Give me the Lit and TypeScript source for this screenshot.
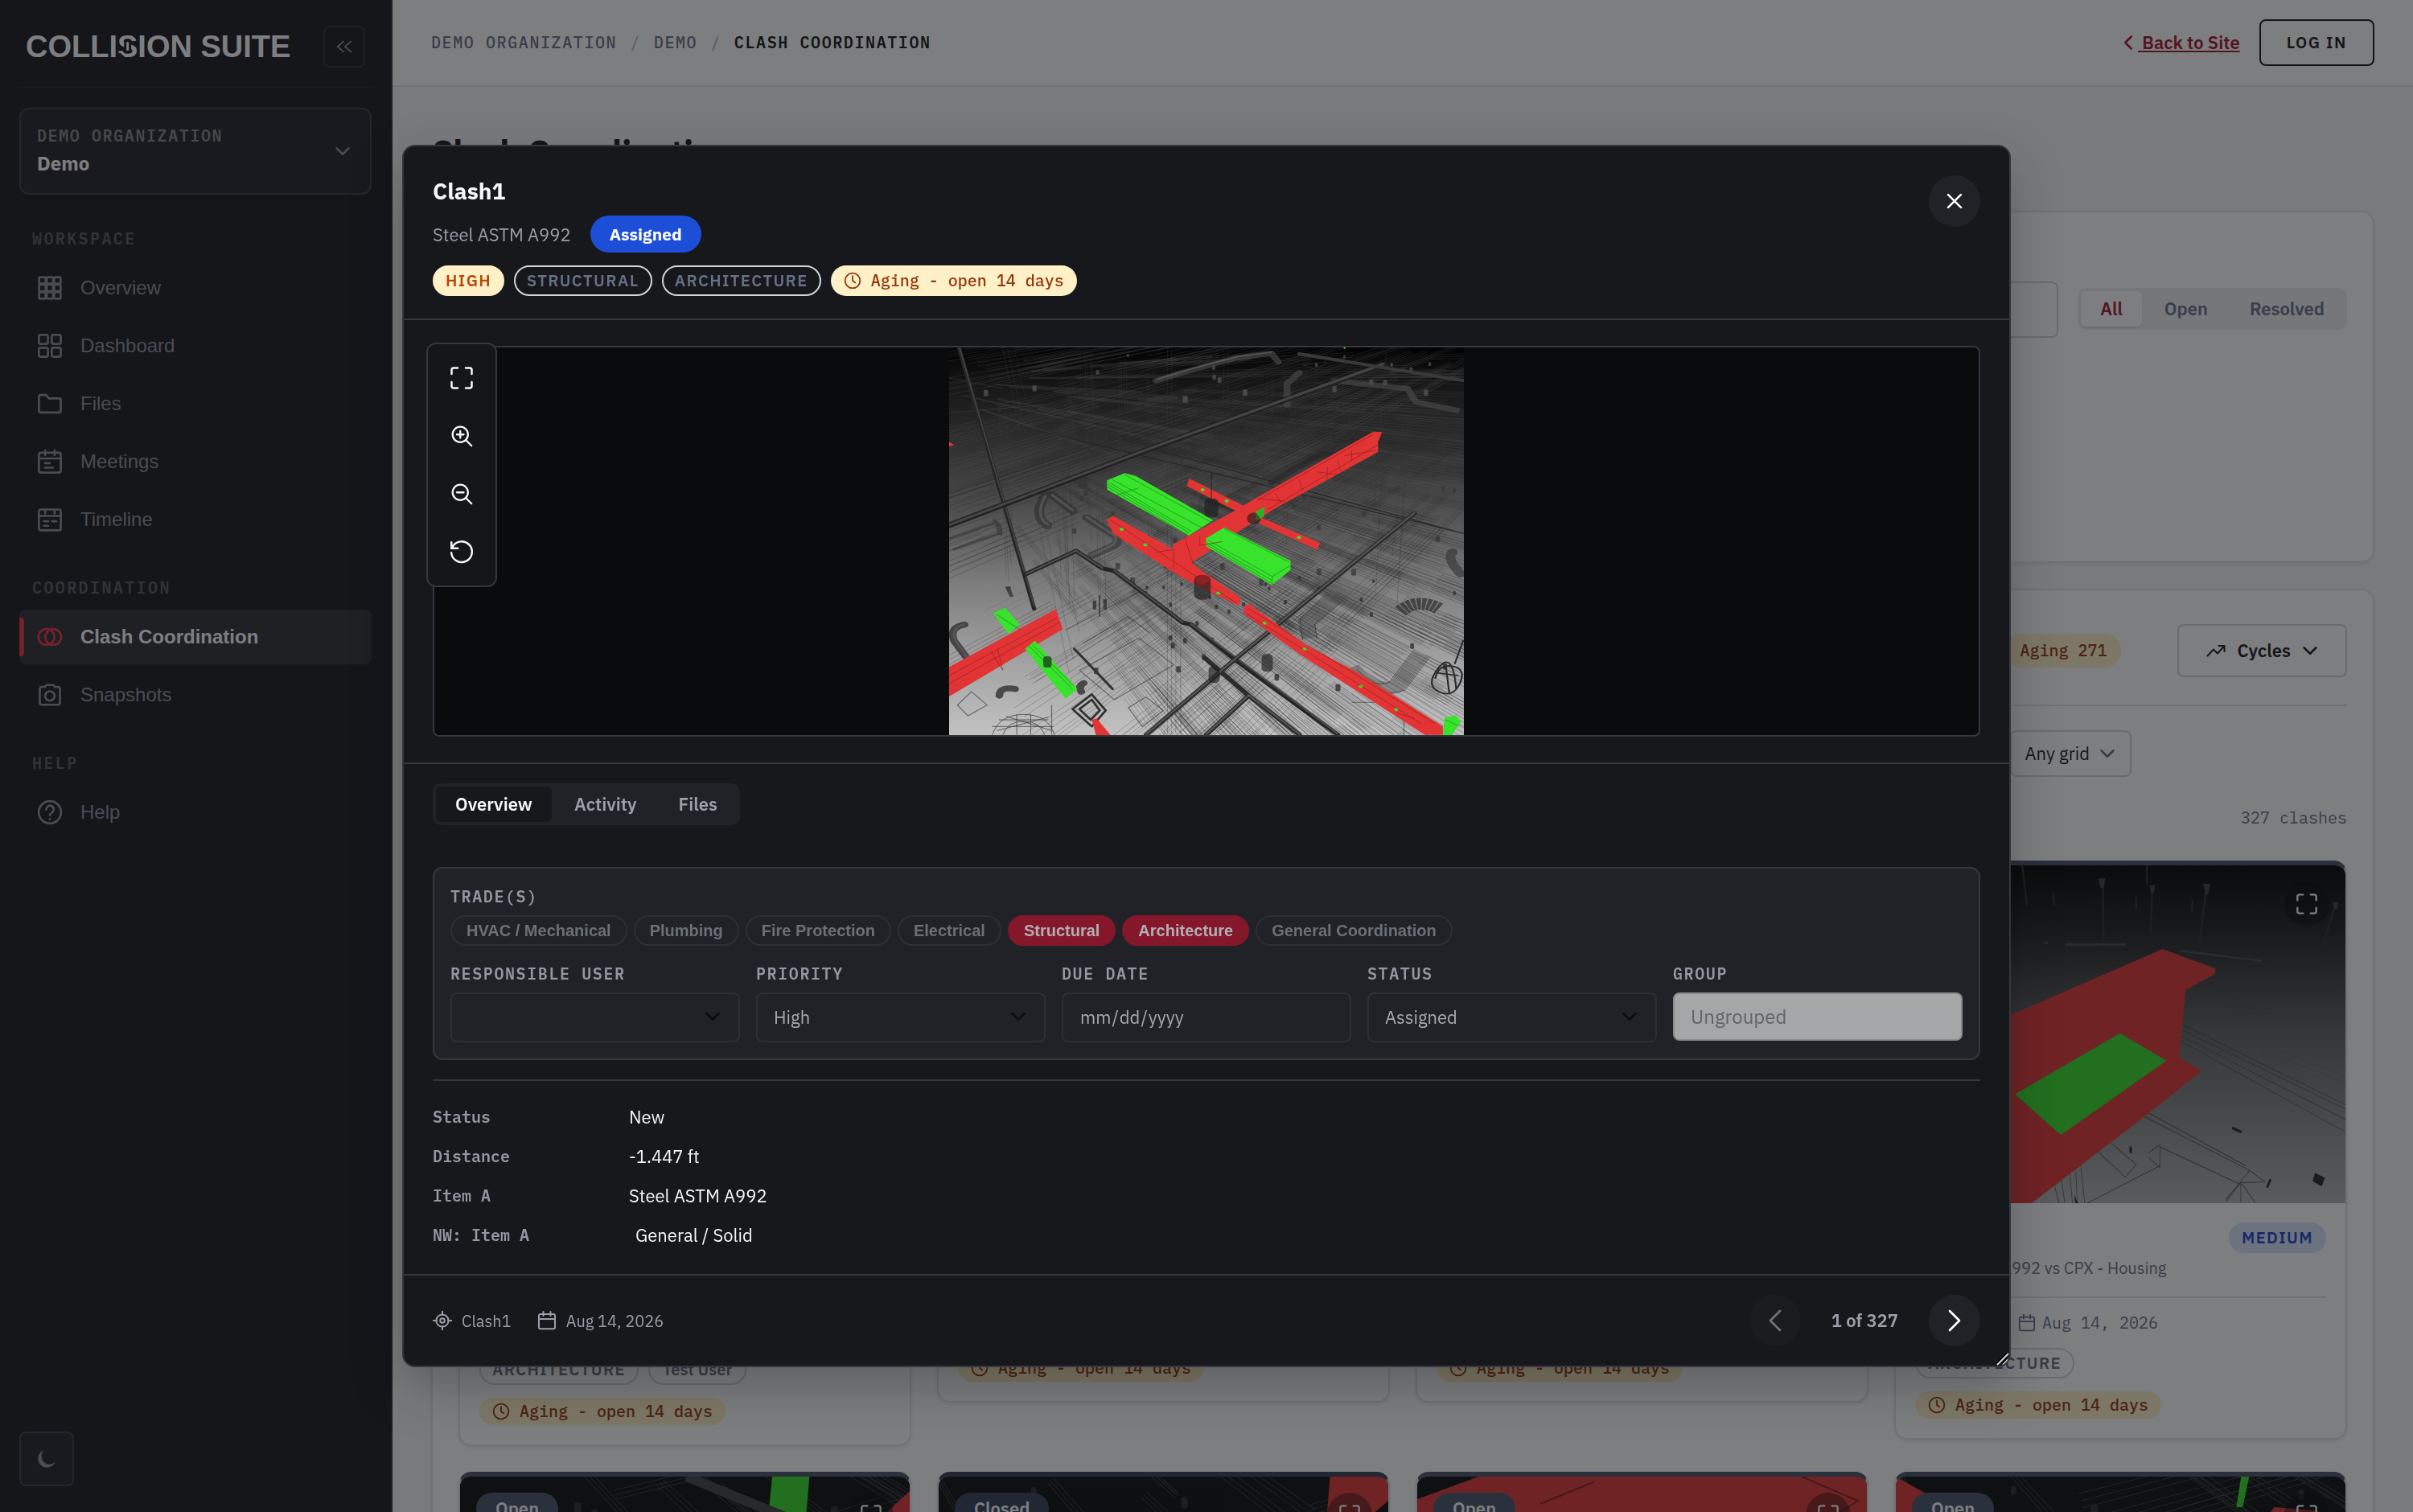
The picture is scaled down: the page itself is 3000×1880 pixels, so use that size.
import { LitElement, html, css, svg, nothing } from "lit";
import { customElement, property, state } from "lit/decorators.js";
import { classMap } from "lit/directives/class-map.js";

/* ---------- icons, all on a 24 unit grid ---------- */

const glyphs: Record<string, unknown> = {
  grid9: svg`${[2, 9, 16].map((y) => [2, 9, 16].map((x) => svg`<rect x=${x} y=${y} width="6" height="6" rx="1"/>`))}`,
  grid4: svg`<rect x="1.8" y="1.8" width="8.4" height="8.4" rx="1.6"/><rect x="13.8" y="1.8" width="8.4" height="8.4" rx="1.6"/><rect x="1.8" y="13.8" width="8.4" height="8.4" rx="1.6"/><rect x="13.8" y="13.8" width="8.4" height="8.4" rx="1.6"/>`,
  folder: svg`<path d="M1.8 18.6V5.4A1.6 1.6 0 0 1 3.4 3.8h5L11.2 7h9.4a1.6 1.6 0 0 1 1.6 1.6v10a1.6 1.6 0 0 1-1.6 1.6H3.4a1.6 1.6 0 0 1-1.6-1.6z"/>`,
  meetings: svg`<rect x="1.8" y="3.6" width="20.4" height="18.6" rx="2"/><path d="M1.8 9h20.4M7.6 1.4v4.4M16.4 1.4v4.4M7.4 13.4h4.4M7.4 17.6h7.4"/>`,
  timeline: svg`<rect x="1.8" y="2.6" width="20.4" height="19.4" rx="2"/><path d="M1.8 8.6h20.4M7.6 2.8v3.6M16.4 2.8v3.6M6.4 13.6h4M14 13.6h4M6.4 17.8h4"/>`,
  clash: svg`<circle cx="8.8" cy="12" r="7.4"/><circle cx="15.2" cy="12" r="7.4"/>`,
  camera: svg`<path d="M4.6 4.600h2.600l1.400-1.800h6.800l1.400 1.800h2.600a2 2 0 0 1 2 2v12.600a2 2 0 0 1-2 2H4.600a2 2 0 0 1-2-2V6.600a2 2 0 0 1 2-2z"/><circle cx="12" cy="13" r="4.400"/>`,
  help: svg`<circle cx="12" cy="12" r="10.400"/><path d="M8.600 9.300a3.500 3.500 0 1 1 5.400 2.900c-1.300.9-2 1.500-2 2.700M12 18.200v.2"/>`,
  collapse: svg`<path d="M11 5l-8 7 8 7M21 5l-8 7 8 7"/>`,
  down: svg`<path d="M3 7.500l9 9 9-9"/>`,
  left: svg`<path d="M16.500 3l-9 9 9 9"/>`,
  right: svg`<path d="M7.500 3l9 9-9 9"/>`,
  close: svg`<path d="M2.500 2.500l19 19M21.500 2.500l-19 19"/>`,
  expand: svg`<path d="M2 8V4a2 2 0 0 1 2-2h4M16 2h4a2 2 0 0 1 2 2v4M22 16v4a2 2 0 0 1-2 2h-4M8 22H4a2 2 0 0 1-2-2v-4"/>`,
  zoomIn: svg`<circle cx="10.500" cy="10.500" r="8.200"/><path d="M16.500 16.500l6 6M10.500 6.800v7.400M6.800 10.500h7.400"/>`,
  zoomOut: svg`<circle cx="10.500" cy="10.500" r="8.200"/><path d="M16.500 16.500l6 6M6.800 10.500h7.400"/>`,
  reset: svg`<path d="M1.800 2.500v6h6.400M2.300 8.500A10.300 10.300 0 1 1 1.700 13"/>`,
  clock: svg`<circle cx="12" cy="12" r="10.200"/><path d="M12 5.600V12l3.600 2.600"/>`,
  target: svg`<circle cx="12" cy="12" r="7.600"/><circle cx="12" cy="12" r="2.800"/><path d="M12 .8v4M12 19.200v4M.8 12h4M19.200 12h4"/>`,
  calendar: svg`<rect x="2" y="4" width="20" height="18.200" rx="2"/><path d="M2 10h20M7.500 1v5M16.500 1v5"/>`,
  trend: svg`<path d="M1.500 18.500l7.500-8 5 5L22 6.500M15.500 6H22.500v7"/>`,
};

const icon = (name: string, cls = "i24") => html`
  <svg class="icon ${cls}" viewBox="0 0 24 24" aria-hidden="true">${glyphs[name]}</svg>
`;

const shared = css`
  :host {
    box-sizing: border-box;
    --sans: "IBM Plex Sans", Roboto, "Liberation Sans", sans-serif;
    --ui: "Liberation Sans", Arial, sans-serif;
    --mono: "IBM Plex Mono", "Liberation Mono", monospace;
  }
  *, *::before, *::after { box-sizing: border-box; }
  button, input, select { font: inherit; color: inherit; margin: 0; }
  button { cursor: pointer; background: none; border: 0; padding: 0; }
  a { color: inherit; text-decoration: none; }
  h1, h2, ul, dl, dd { margin: 0; padding: 0; }
  .icon { display: block; flex: none; fill: none; stroke: currentColor; stroke-width: 2; stroke-linecap: round; stroke-linejoin: round; overflow: visible; }
  .i20 { width: 20px; height: 20px; stroke-width: 3; }
  .i22 { width: 22px; height: 22px; }
  .i24 { width: 24px; height: 24px; }
  .i28 { width: 28px; height: 28px; }
  .i30 { width: 30px; height: 30px; }
  .i32 { width: 32px; height: 32px; }
  .pill {
    display: inline-flex; align-items: center; height: 38px; padding: 0 14px;
    border: 2px solid #d0d5dd; border-radius: 20px; color: #667085;
    font: 600 20px/34px var(--sans); letter-spacing: 0.07em; white-space: nowrap;
  }
  .pill.high { background: #fef0c7; border-color: #fef0c7; color: #b54708; }
  .pill.medium { background: #d9e5fb; border-color: #d9e5fb; color: #1e3fce; }
  .pill.person { letter-spacing: 0; padding: 0 16px; }
  .aging {
    display: inline-flex; align-items: center; gap: 12px; height: 34px; padding: 0 16px;
    border-radius: 20px; background: #fef0c7; color: #93370d;
    font: 500 20px/34px var(--mono); white-space: nowrap;
  }
  .aging.large { height: 38px; }
`;

/* ---------- model snapshots ---------- */

/** Small repeatable generator, so that each snapshot keeps the same wires. */
const seeded = (seed: number) => () => {
  seed = (seed * 1664525 + 1013904223) % 4294967296;
  return seed / 4294967296;
};

type Point = [number, number];

/** Bundles of wires that run away from one vanishing point. */
const bundle = (
  rand: () => number, origin: Point, from: number, to: number, near: number, far: number,
  count: number, strands: number
): string => {
  let d = "";
  for (let i = 0; i < count; i++) {
    const angle = from + (to - from) * rand();
    const start = near + (far - near) * rand() * 0.8;
    const end = start + (far - near) * (0.06 + rand() * 0.4);
    const gap = 0.004 + rand() * 0.004;
    for (let k = 0; k < strands; k++) {
      const a = angle + k * gap;
      d += `M${Math.round(origin[0] + Math.cos(a) * start)} ${Math.round(origin[1] + Math.sin(a) * start)}`;
      d += `L${Math.round(origin[0] + Math.cos(a) * end)} ${Math.round(origin[1] + Math.sin(a) * end)}`;
    }
  }
  return d;
};

const cans = (rand: () => number, count: number, x0: number, x1: number, y0: number, y1: number) =>
  Array.from({ length: count }, () => {
    const x = x0 + rand() * (x1 - x0);
    const y = y0 + rand() * (y1 - y0);
    const s = 0.5 + (0.6 * (y - y0)) / (y1 - y0);
    return svg`<rect x=${Math.round(x)} y=${Math.round(y)} width=${Math.round(13 * s)} height=${Math.round(24 * s)} rx="4"/>`;
  });

const clashScene = () => {
  const r = seeded(41);
  const fall = bundle(r, [-111, 156], 0.1, 1.05, 600, 2100, 120, 4);
  const fallLow = bundle(r, [-111, 156], 0.42, 1.0, 900, 2300, 110, 4);
  const rise = bundle(r, [2368, -414], 2.2, 2.78, 1100, 2900, 90, 3);
  const top = bundle(r, [-111, 156], -0.1, 0.45, 200, 1900, 60, 3);
  const topRise = bundle(r, [2368, -414], 2.55, 2.95, 900, 2600, 90, 3);
  let posts = "";
  for (let i = 0; i < 12; i++) {
    const x = 90 + r() * 1300;
    const y = 40 + r() * 300;
    for (let k = 0; k < 4; k++) posts += `M${Math.round(x + k * 7)} ${Math.round(y)}l${Math.round((700 - x) / 22)} ${Math.round(300 + r() * 420)}`;
  }
  posts += "M672 40V1480M684 40V1480M696 300V1480M710 420V1480M834 40V420M846 40V400M200 40L390 1250M214 40L402 1200M236 60L420 1100M1300 60L1280 330";
  return svg`
    <defs>
      <linearGradient id="haze" x1="0" y1="0" x2="0" y2="1">
        <stop offset="0" stop-color="#020202"/><stop offset=".1" stop-color="#171717"/>
        <stop offset=".24" stop-color="#2e2e2e"/><stop offset=".4" stop-color="#4a4a4a"/>
        <stop offset=".6" stop-color="#7b7b7b"/><stop offset=".8" stop-color="#a0a0a0"/>
        <stop offset="1" stop-color="#c2c2c2"/>
      </linearGradient>
    </defs>
    <rect x="46" y="36" width="1476" height="1446" fill="url(#haze)"/>
    <g fill="none" stroke-width="1.500">
      <path d=${top} stroke="#5c5c5c" opacity=".35"/>
      <path d=${topRise} stroke="#5c5c5c" opacity=".4"/>
      <path d=${posts} stroke="#3a3a3a" opacity=".5"/>
      <path d=${fall} stroke="#222" opacity=".4"/>
      <path d=${rise} stroke="#222" opacity=".45"/>
      <path d=${fallLow} stroke="#1c1c1c" opacity=".5"/>
      <path d="M250 330L1522 730M615 410L1522 730" stroke="#242424" opacity=".8" stroke-width="4"/>
      <path d="M420 1240L590 1120 690 1220 520 1350zM560 1380L610 1340 660 1390 600 1450zM70 1370L110 1320 155 1370 100 1410zM380 1090L600 940M430 1140L560 1040 620 1100M1200 1360H1350V1480M340 1370V1480" stroke="#333" opacity=".6" stroke-width="3"/>
      <path d="M46 280L320 250M46 500L230 425M1310 550L1520 530M46 150L200 190M1060 100L1130 90 1100 120z" stroke="#555" opacity=".6"/>
    </g>
    <g fill="#353535" opacity=".7">${cans(r, 44, 380, 1500, 360, 900)}</g>
    <g fill="#2a2a2a" opacity=".75">${cans(r, 32, 420, 1500, 860, 1300)}</g>
    <g fill="#606060" opacity=".6">${cans(r, 18, 90, 1480, 60, 220)}</g>
    <g fill="none" stroke-linejoin="round" stroke-linecap="round">
      <g opacity=".6">
        <path d="M640 160L720 128 870 75 970 58 990 90M1015 250L1015 170 1050 130M1150 160L1360 190 1385 240 1500 270" stroke="#4c4c4c" stroke-width="20"/>
        <path d="M320 590C296 640 300 680 328 700M340 585L400 645" stroke="#2e2e2e" stroke-width="28"/>
        <path d="M440 670L520 735Q540 750 520 775L455 812M430 515V552" stroke="#333" stroke-width="26"/>
        <path d="M970 540L1110 435 1150 435" stroke="#262626" stroke-width="20"/>
        <path d="M1490 800Q1470 820 1512 880" stroke="#333" stroke-width="28"/>
        <path d="M46 750L180 690 190 730 60 790M175 680Q200 700 195 735" stroke="#333" stroke-width="8"/>
      </g>
      <g opacity=".5">
        <path d="M322 590C300 640 304 680 330 697M342 587L400 643M440 668L518 735Q532 750 515 773L455 810" stroke="#6c6c6c" stroke-width="8"/>
        <path d="M642 156L720 124 870 71 970 54" stroke="#777" stroke-width="5"/>
      </g>
      <path d="M75 40L110 200 290 1012" stroke="#262626" stroke-width="12"/>
      <path d="M77 40L112 200 290 1000" stroke="#444" stroke-width="4"/>
      <path d="M46 700L600 425 1290 100" stroke="#222" stroke-width="20"/>
      <path d="M46 698L600 423 1290 98" stroke="#454545" stroke-width="9"/>
      <path d="M1050 60L1522 160" stroke="#3a3a3a" stroke-width="12"/>
      <path d="M265 882L410 795 485 860 520 870 715 1062 740 1070 860 1195 1160 1480" stroke="#262626" stroke-width="15"/>
      <path d="M268 880L410 794 485 858M520 868L715 1060M740 1068L1160 1476" stroke="#4c4c4c" stroke-width="6"/>
      <path d="M612 1480L870 1195 1380 655M784 1480L905 1335M780 1195L905 1335 1050 1480" stroke="#2c2c2c" stroke-width="15"/>
      <path d="M612 1478L870 1193 1380 653M784 1478L905 1333M905 1333L1050 1478" stroke="#555" stroke-width="6"/>
      <path d="M90 1070Q45 1080 60 1130L100 1200M190 1335Q190 1300 235 1310M425 1320Q415 1300 432 1288" stroke="#303030" stroke-width="22" opacity=".8"/>
      <path d="M90 1068Q50 1080 64 1130L100 1196" stroke="#5a5a5a" stroke-width="7" opacity=".8"/>
      <path d="M1340 1020Q1390 970 1450 1010" stroke="#363636" stroke-width="44" stroke-dasharray="11 3" stroke-linecap="butt" opacity=".8"/>
      <path d="M1150 970L1070 1060 1080 1120M1400 1180L1330 1300Q1260 1330 1200 1230" stroke="#3c3c3c" stroke-width="48" stroke-linecap="butt" opacity=".35"/>
      <path d="M1130 950L1052 1050 1060 1125M1168 990L1095 1070 1100 1120M1378 1165L1308 1285Q1260 1310 1215 1235M1422 1195L1352 1315Q1270 1350 1185 1250" stroke="#2c2c2c" stroke-width="2" opacity=".8"/>
      <path d="M405 1160L515 1310" stroke="#333" stroke-width="8"/>
      <path d="M400 1385L455 1330 495 1390 455 1450zM420 1385L455 1350 478 1390 452 1425z" stroke="#303030" stroke-width="7"/>
      <path d="M170 1480Q190 1405 260 1405T348 1480M200 1480Q215 1430 260 1430T320 1480M170 1450H345M190 1425H330M240 1405V1480M280 1405V1480M185 1465L330 1415M210 1412L340 1465" stroke="#3d3d3d" stroke-width="2"/>
      <path d="M1440 1270Q1450 1215 1490 1225T1510 1290 1450 1320 1450 1230 1500 1310M1445 1250L1505 1260M1470 1222L1480 1325M1520 1130L1496 1215" stroke="#2c2c2c" stroke-width="5"/>
    </g>
    <g fill="#e23434">
      <path d="M46 388l14 12-14 6zM498 680l18-16 180 130 70 70 115 105-2 32-120-75-62-45-180-150z"/>
      <path d="M735 525l160 105-8 28-160-105zM940 670l170 95-8 26-170-100z"/>
      <path d="M1262 350l26 2-12 36v38L1130 530 990 630 860 735 700 876l-12-106 170-120 60-46z"/>
      <path d="M46 1228L352 1012l20 75L46 1338zM455 1425l14-5 40 62h-42zM892 1000l15-6 160 150 150 105 245 200v32h-52L1050 1180 890 1028z"/>
    </g>
    <g fill="#37e42b">
      <path d="M499 532l50-27 32 10 222 165-70 58L499 566z"/>
      <path d="M783 748l52-40 190 124v34l-54 56L783 778z"/>
      <path d="M172 1027l34-20 42 62-32 36zM264 1160l28-30 122 180-34 36zM1466 1420l32-12 16 22-26 52h-26zM925 650l25-20-2 36-22 18z"/>
      ${[[541, 714], [609, 772], [818, 952], [950, 1065], [1065, 1162], [1227, 1300], [1328, 1386], [773, 567], [842, 609], [1049, 745]].map(
        ([x, y]) => svg`<circle cx=${x} cy=${y} r="6"/>`)}
      <circle cx="1180" cy="38" r="3"/>
    </g>
    <g fill="none" stroke="#18701a" stroke-width="2" opacity=".75">
      <path d="M503 538L740 722M501 546L735 728M512 528L770 708M500 556L730 735M549 510L800 690M520 590L590 560"/>
      <path d="M785 764L972 905M790 756L975 892M784 772L970 915M972 920V890L1024 850M835 712L1020 836M180 1030L250 1090M275 1150L400 1310M285 1145L405 1300M1470 1425L1510 1450"/>
    </g>
    <g fill="none" stroke="#8e1c1c" stroke-width="2" opacity=".8">
      <path d="M1262 360L930 606M1275 400L960 640M1160 460L1170 500M1050 530L1060 570M1200 420V460M930 600L1010 610M1130 480V530M980 580L1000 620M1100 500L1160 510M1180 440L1270 420M720 740L745 840M765 740V775L830 760"/>
      <path d="M46 1260L355 1045M46 1290L365 1060M166 1170L200 1240 185 1160M905 1010L1440 1440M900 1030L1400 1440M510 680L870 990M640 800L690 790V860M1330 1400L1380 1420"/>
    </g>
    <g fill="#202020" opacity=".65">
      <rect x="748" y="885" width="48" height="92" rx="20"/><rect x="778" y="600" width="40" height="70" rx="14"/>
      <rect x="942" y="1180" width="32" height="66" rx="14"/><rect x="316" y="1188" width="24" height="42" rx="10"/>
      <rect x="790" y="1225" width="32" height="62" rx="12"/><ellipse cx="920" cy="674" rx="20" ry="22"/>
      <path d="M797 505h3v95h-3zM475 960h4v80h-4zM458 980h10v34h-10zM488 976h10v38h-10zM206 928h16l2 14 6 24h-10z"/>
    </g>
    <ellipse cx="772" cy="902" rx="20" ry="18" fill="#a02020" opacity=".7"/>
    <path d="M925 650l25-20-2 36-10 8z" fill="#2fae28"/>
  `;
};

const beamScene = () => {
  const r = seeded(7);
  const wires = bundle(r, [-600, -60], 0.1, 0.42, 600, 2200, 12, 3);
  return svg`
    <defs>
      <linearGradient id="dusk" x1="0" y1="0" x2="0" y2="1">
        <stop offset="0" stop-color="#020202"/><stop offset=".2" stop-color="#222"/>
        <stop offset=".5" stop-color="#636363"/><stop offset="1" stop-color="#b2b2b2"/>
      </linearGradient>
    </defs>
    <rect x="0" y="31" width="1362" height="803" fill="url(#dusk)"/>
    <path d=${wires} fill="none" stroke="#2a2a2a" stroke-width="1" opacity=".25"/>
    <g fill="none" stroke="#303030" stroke-width="5">
      <path d="M383 31l14 95M761 31v45M627 75l3 135M777 90l-6 105M940 85l-20 135M1332 125l-40 100M476 96l4 30M728 105v28M899 113l-3 28" />
      <path d="M514 219h182M860 234l250 24M450 215h12" stroke="#4a4a4a"/>
    </g>
    <g fill="#3f3f3f"><path d="M614 62h21l-5 22h-10zM768 78h18l-6 20h-6zM931 75h22l-7 26h-8zM1322 118h20l-6 18h-8z"/></g>
    <g fill="none" stroke="#222" stroke-width="2" opacity=".6">
      <path d="M610 710L695 772 728 742 650 690M752 628L1072 756 1118 784 1045 785 1000 830M765 715L800 695V750L765 725M800 700L1045 790V834M800 745L580 834M755 615L1060 745M1072 756L1000 825M1045 785L1090 834M525 745L535 834M560 740L572 834M500 770L512 834M480 790L495 834M545 760L550 834"/>
    </g>
    <path d="M860 420L1362 610M860 435L1362 635M870 410L1362 600M866 450L1362 665" fill="none" stroke="#333" stroke-width="2" opacity=".5"/>
    <g fill="#262626"><path d="M1020 652l28 10-2 6-28-10zM1132 776l6 2-10 20-6-2zM1270 762l30 12-10 20-28-12zM708 698l8 4-2 16-6-6zM540 814l12 20h-8z"/></g>
    <path fill="#e13636" d="M0 500L343 388 808 230 968 276V288L878 328 858 487 923 517V522L750 630 412 834H0z"/>
    <path fill="#35dd29" d="M361 575L679 430 820 495 500 672z"/>
  `;
};

const rowScene = (kind: number) => {
  const r = seeded(90 + kind);
  const wires = bundle(r, [-300, -500], 0.3, 1.2, 500, 1700, 50, 3) + bundle(r, [1500, -300], 2.0, 2.9, 300, 1800, 30, 3);
  const shapes = [
    svg`<path fill="#e13636" d="M0 52L78 22V60L0 140zM556 18L478 90 440 200H556z"/><path fill="#35dd29" d="M386 0h46l-10 120h-48z"/>
        <path d="M280 0L470 78 560 110" stroke="#444" stroke-width="12" fill="none"/>`,
    svg`<path fill="#e13636" d="M22 50L72 28 150 90 60 220zM484 0h72v30L510 70 490 90 462 78 480 50z"/>`,
    svg`<path fill="#e13636" d="M0 28L76 0H556V420H0z"/><path d="M152 34L220 6M475 0L545 30 520 46M200 60L178 90" stroke="#8e1c1c" fill="none" stroke-width="2"/>`,
    svg`<path fill="#e13636" d="M0 0L60 34 90 90 0 110zM430 66l6-16 22 2 10-14 50 4 38 12v200H400z"/><path fill="#35dd29" d="M427 0h10l-8 38h-8z"/>`,
  ];
  return svg`
    <rect width="556" height="420" fill="#0c0c0c"/>
    <path d=${wires} fill="none" stroke="#555" stroke-width="1" opacity=".55"/>
    <g fill="#383838" opacity=".7">${cans(r, 9, 60, 520, 10, 90)}</g>
    ${shapes[kind]}
  `;
};

/* ---------- sidebar ---------- */

interface NavSection { title: string; items: { label: string; glyph: string; active?: boolean }[]; }

const sections: NavSection[] = [
  { title: "WORKSPACE", items: [
    { label: "Overview", glyph: "grid9" }, { label: "Dashboard", glyph: "grid4" }, { label: "Files", glyph: "folder" },
    { label: "Meetings", glyph: "meetings" }, { label: "Timeline", glyph: "timeline" } ] },
  { title: "COORDINATION", items: [
    { label: "Clash Coordination", glyph: "clash", active: true }, { label: "Snapshots", glyph: "camera" } ] },
  { title: "HELP", items: [{ label: "Help", glyph: "help" }] },
];

@customElement("app-sidebar")
class AppSidebar extends LitElement {
  static styles = [shared, css`
    :host { display: flex; flex-direction: column; width: 488px; flex: none; padding: 32px 24px; background: #18191e; border-right: 2px solid #24262f; color: #8e909b; font-family: var(--ui); }
    .brand { display: flex; align-items: center; justify-content: space-between; padding: 0 8px 24px; border-bottom: 2px solid #232429; }
    .logo { color: #fff; font: 700 38px/52px var(--ui); white-space: nowrap; }
    .mark { position: relative; }
    .mark svg { position: absolute; left: 0; top: 0; width: 100%; height: 100%; overflow: visible; }
    .collapse { display: grid; place-items: center; width: 52px; height: 52px; border: 2px solid #2d2e33; border-radius: 8px; }
    .org { display: flex; align-items: center; justify-content: space-between; margin-top: 24px; padding: 0 24px 0 20px; height: 108px; border: 2px solid #3c3d43; border-radius: 12px; background: #222328; text-align: left; }
    .org-name { display: block; font: 600 20px/30px var(--mono); letter-spacing: 0.08em; color: #86878c; }
    .org-project { display: block; font: 700 24px/38px var(--sans); color: #fff; }
    nav { flex: 1; padding-top: 4px; }
    .title { margin-top: 36px; padding: 0 16px; margin-bottom: 12px; font: 600 20px/30px var(--mono); letter-spacing: 0.12em; color: #595a60; }
    .list { display: grid; gap: 4px; list-style: none; }
    .item { position: relative; display: flex; align-items: center; gap: 22px; height: 68px; padding: 0 22px; border-radius: 8px; font-size: 24px; overflow: hidden; }
    .item.active { background: #2e2f34; color: #fff; font-weight: 700; }
    .item.active .icon { color: #e8324a; }
    .item.active::before { content: ""; position: absolute; left: 0; top: 10px; bottom: 10px; width: 6px; border-radius: 0 4px 4px 0; background: #e8324a; }
    .theme { display: grid; place-items: center; width: 68px; height: 68px; border: 2px solid #3c3d43; border-radius: 8px; background: #222328; }
    .moon { fill: #8e909b; stroke: none; }
  `];

  render() {
    return html`
      <div class="brand">
        <span class="logo">COLLI<span class="mark">S<svg viewBox="0 0 25 43" aria-hidden="true">
          <rect x="8" y="13" width="9" height="16" rx="3" fill="#18191e"/>
          <path d="M12.500 15.500v11" stroke="#fff" stroke-width="3"/>
          <path d="M18 6l6 5M2 30l6 5" stroke="#18191e" stroke-width="2"/></svg></span>ION SUITE</span>
        <button class="collapse" aria-label="Collapse sidebar">${icon("collapse", "i22")}</button>
      </div>
      <button class="org">
        <span><span class="org-name">DEMO ORGANIZATION</span><span class="org-project">Demo</span></span>
        ${icon("down", "i20")}
      </button>
      <nav>
        ${sections.map((s) => html`
          <div class="title">${s.title}</div>
          <ul class="list">
            ${s.items.map((i) => html`<li><a class=${classMap({ item: true, active: !!i.active })} href="#">${icon(i.glyph, "i32")}${i.label}</a></li>`)}
          </ul>`)}
      </nav>
      <button class="theme" aria-label="Toggle theme">
        <svg class="icon i24 moon" viewBox="0 0 24 24" aria-hidden="true"><path d="M8.500 1.500A11 11 0 1 0 22.500 16 9.500 9.500 0 0 1 8.500 1.500z"/></svg>
      </button>
    `;
  }
}

/* ---------- clash cards ---------- */

interface ClashCard {
  scene?: () => unknown;
  priority?: string; subject?: string; date?: string; tags?: string[]; person?: string; aging?: string;
  badge?: string; closed?: boolean; box?: string;
}

@customElement("clash-card")
class ClashCardElement extends LitElement {
  @property({ attribute: false }) card: ClashCard = {};

  static styles = [shared, css`
    :host { display: block; }
    .card { border: 2px solid #e3e3ea; border-top: 6px solid #475569; border-radius: 16px; background: #fff; overflow: hidden; box-shadow: 0 2px 4px rgba(16, 24, 40, 0.1); }
    .closed { border-top-color: #334155; }
    .shot { position: relative; height: 420px; background: #0c0c0c; border-radius: 12px 12px 0 0; overflow: hidden; }
    .shot > svg { display: block; width: 100%; height: 100%; }
    .badge { position: absolute; left: 20px; top: 20px; height: 40px; padding: 0 24px; border-radius: 22px; background: #475569; color: #fff; font: 600 22px/40px var(--sans); }
    .closed .badge { background: #334155; }
    .expand { position: absolute; right: 20px; top: 20px; width: 56px; height: 56px; display: grid; place-items: center; border-radius: 50%; background: rgba(0, 0, 0, 0.4); color: #fff; }
    .body { padding: 24px; }
    .summary { display: flex; flex-direction: column; min-height: 148px; margin-bottom: 16px; }
    .summary.compact { min-height: 140px; }
    .head { display: flex; justify-content: flex-end; }
    .subject { margin-top: 6px; font: 400 20px/26px var(--sans); color: #667085; }
    .when { display: flex; align-items: center; justify-content: flex-start; gap: 8px; margin-top: 22px; padding: 16px 0 0 128px; border-top: 2px solid #e3e3ea; font: 400 20px/30px var(--mono); color: #667085; }
    .tags { display: flex; gap: 12px; margin-bottom: 16px; }
  `];

  render() {
    const c = this.card;
    return html`
      <article class=${classMap({ card: true, closed: !!c.closed })}>
        <div class="shot">
          ${c.scene ? html`<svg viewBox=${c.box ?? "0 0 556 420"} preserveAspectRatio="none" aria-hidden="true">${c.scene()}</svg>` : nothing}
          ${c.badge ? html`<span class="badge">${c.badge}</span>` : nothing}
          <button class="expand" aria-label="Expand">${icon("expand", "i28")}</button>
        </div>
        <div class="body">
          <div class=${classMap({ summary: true, compact: !!c.subject })}>
            ${c.subject ? html`
              <div class="head"><span class="pill medium">${c.priority}</span></div>
              <div class="subject">${c.subject}</div>
              <div class="when">${icon("calendar", "i22")}${c.date}</div>` : nothing}
          </div>
          ${c.tags ? html`<div class="tags">${c.tags.map((t) => html`<span class="pill">${t}</span>`)}${c.person ? html`<span class="pill person">${c.person}</span>` : nothing}</div>` : nothing}
          ${c.aging ? html`<span class="aging">${icon("clock", "i22")}${c.aging}</span>` : nothing}
        </div>
      </article>
    `;
  }
}

const AGING = "Aging - open 14 days";

const cards: ClashCard[] = [
  { tags: ["ARCHITECTURE"], person: "Test User", aging: AGING },
  { aging: AGING },
  { aging: AGING },
  { scene: beamScene, box: "0 31 1362 803", priority: "MEDIUM", subject: "Steel ASTM A992 vs CPX - Housing", date: "Aug 14, 2026", tags: ["ARCHITECTURE"], aging: AGING },
  { scene: () => rowScene(0), badge: "Open" },
  { scene: () => rowScene(1), badge: "Closed", closed: true },
  { scene: () => rowScene(2), badge: "Open" },
  { scene: () => rowScene(3), badge: "Open" },
];

/* ---------- page behind the dialog ---------- */

@customElement("clash-page")
class ClashPage extends LitElement {
  static styles = [shared, css`
    :host { display: block; flex: 1; min-width: 0; background: #f7f7f8; font-family: var(--sans); color: #17181c; overflow: hidden; }
    header { display: flex; align-items: center; justify-content: space-between; height: 108px; padding: 0 48px; background: #fff; border-bottom: 2px solid #e6e6ea; }
    .crumbs { display: flex; gap: 16px; font: 500 20px/30px var(--mono); letter-spacing: 0.08em; color: #667085; }
    .sep { color: #b9bcc6; }
    .here { color: #17181c; font-weight: 600; }
    .account { display: flex; align-items: center; gap: 24px; }
    .back { display: flex; align-items: center; gap: 2px; color: #a3142b; font: 600 22px/30px var(--sans); }
    .back span { text-decoration: underline; white-space: pre; }
    .login { height: 58px; padding: 0 32px; border: 2px solid #17181c; border-radius: 8px; font: 600 20px/30px var(--sans); letter-spacing: 0.08em; }
    main { padding: 52px 48px 0; }
    h1 { font: 700 42px/60px var(--sans); }
    .card { border: 2px solid #e3e3ea; border-radius: 16px; background: #fff; padding: 32px; box-shadow: 0 2px 6px rgba(16, 24, 40, 0.08); }
    .search { display: flex; gap: 24px; margin-top: 42px; min-height: 438px; align-items: flex-start; padding-top: 86px; }
    .query { flex: 1; height: 70px; border: 2px solid #d5d3dc; border-radius: 8px; padding: 0 24px; background: #fff; }
    .segments { display: flex; gap: 4px; margin-top: 8px; padding: 4px; border-radius: 10px; background: #eef0f3; color: #667085; }
    .segment { height: 44px; padding: 0 24px; border-radius: 6px; font: 600 22px/44px var(--sans); }
    .segment.on { background: #fff; color: #a3142b; box-shadow: 0 2px 3px rgba(16, 24, 40, 0.12); }
    .board { margin-top: 32px; padding-top: 42px; }
    .tools { display: flex; align-items: center; justify-content: flex-end; gap: 70px; padding-bottom: 34px; border-bottom: 2px solid #e3e3ea; }
    .tools .aging { height: 42px; padding: 0 18px; }
    .cycles { display: flex; align-items: center; gap: 14px; height: 66px; padding: 0 34px; border: 2px solid #d5d3dc; border-radius: 8px; font: 600 22px/30px var(--sans); }
    .filters { display: flex; justify-content: flex-end; margin-top: 30px; padding-right: 268px; }
    .filter { display: flex; align-items: center; gap: 12px; height: 58px; padding: 0 18px 0 16px; border: 2px solid #d5d3dc; border-radius: 8px; font: 400 22px/30px var(--sans); }
    .filter .icon { color: #667085; }
    .count { margin-top: 36px; text-align: right; font: 400 20px/30px var(--mono); color: #667085; }
    .grid { display: grid; grid-template-columns: repeat(4, minmax(0, 1fr)); gap: 32px; align-items: start; margin-top: 38px; }
  `];

  render() {
    return html`
      <header>
        <nav class="crumbs"><a href="#">DEMO ORGANIZATION</a><span class="sep">/</span><a href="#">DEMO</a><span class="sep">/</span><span class="here">CLASH COORDINATION</span></nav>
        <div class="account">
          <a class="back" href="#">${icon("left", "i20")}<span> Back to Site</span></a>
          <button class="login">LOG IN</button>
        </div>
      </header>
      <main>
        <h1>Clash Coordination</h1>
        <section class="card search">
          <input class="query" type="search" aria-label="Search" />
          <div class="segments">
            <button class="segment on">All</button><button class="segment">Open</button><button class="segment">Resolved</button>
          </div>
        </section>
        <section class="card board">
          <div class="tools">
            <span class="aging">Aging 271</span>
            <button class="cycles">${icon("trend", "i24")}Cycles${icon("down", "i20")}</button>
          </div>
          <div class="filters"><button class="filter">Any grid${icon("down", "i20")}</button></div>
          <div class="count">327 clashes</div>
          <div class="grid">${cards.map((c) => html`<clash-card .card=${c}></clash-card>`)}</div>
        </section>
      </main>
    `;
  }
}

/* ---------- clash dialog ---------- */

const trades = [
  { name: "HVAC / Mechanical" }, { name: "Plumbing" }, { name: "Fire Protection" }, { name: "Electrical" },
  { name: "Structural", on: true }, { name: "Architecture", on: true }, { name: "General Coordination" },
];

const facts = [
  { key: "Status", value: "New" }, { key: "Distance", value: "-1.447 ft" },
  { key: "Item A", value: "Steel ASTM A992" }, { key: "NW: Item A", value: "General / Solid", nested: true },
];

@customElement("clash-dialog")
class ClashDialog extends LitElement {
  @state() private tab = "Overview";

  static styles = [shared, css`
    :host { display: block; width: 2000px; max-width: calc(100% - 48px); }
    .dialog { position: relative; border: 2px solid #35363e; border-radius: 16px; background: #17181c; color: #f7f7f8; font-family: var(--sans); box-shadow: 0 24px 64px rgba(0, 0, 0, 0.25); overflow: hidden; }
    .head { display: flex; justify-content: space-between; align-items: flex-start; padding: 36px 36px 28px; border-bottom: 2px solid #35363e; }
    h2 { font: 700 28px/40px var(--sans); }
    .who { display: flex; align-items: center; gap: 24px; margin-top: 10px; font-size: 22px; color: #9c9ea9; }
    .status { height: 46px; padding: 0 24px; border-radius: 23px; background: #1d4ed8; color: #fff; font: 700 21px/46px var(--sans); }
    .tags { display: flex; gap: 12px; margin-top: 16px; }
    .round { display: grid; place-items: center; width: 64px; height: 64px; border-radius: 50%; background: #212227; color: #fff; }
    .round:disabled { opacity: 0.4; }
    .stage { padding: 32px 36px; border-bottom: 2px solid #35363e; }
    .frame { position: relative; display: flex; justify-content: center; border: 2px solid #35363e; border-radius: 8px; background: #0a0b0d; }
    .photo { display: block; width: 640px; height: 482px; }
    .tools { position: absolute; left: -10px; top: -6px; display: grid; gap: 4px; padding: 8px; border: 2px solid #35363e; border-radius: 12px; background: #15161a; }
    .tool { display: grid; place-items: center; width: 68px; height: 68px; }
    .content { padding: 24px 36px 32px; }
    .tabs { display: inline-flex; gap: 4px; padding: 4px; border-radius: 10px; background: #212227; color: #9c9ea9; }
    .tab { height: 44px; padding: 0 24px; border-radius: 6px; font: 600 22px/44px var(--sans); }
    .tab.on { background: #17181c; color: #f7f7f8; }
    .panel { margin-top: 52px; padding: 20px; border: 2px solid #35363e; border-radius: 12px; background: #212227; }
    .label { display: block; margin-bottom: 8px; font: 600 20px/30px var(--mono); letter-spacing: 0.08em; color: #9496a2; }
    .trades { display: flex; flex-wrap: wrap; gap: 8px; margin-bottom: 20px; }
    .trade { height: 38px; padding: 0 18px; border: 2px solid #2e2f35; border-radius: 19px; font: 700 20px/34px var(--ui); color: #6b7078; }
    .trade.on { background: #85172b; border-color: #85172b; color: #b0b0b4; }
    .fields { display: grid; grid-template-columns: repeat(5, minmax(0, 1fr)); gap: 20px; align-items: start; }
    .field { position: relative; }
    .control { display: block; width: 100%; height: 62px; padding: 0 20px; border: 2px solid #2e2f35; border-radius: 8px; background: #212227; color: #a9aaae; font: 400 22px/30px var(--sans); appearance: none; outline: 0; opacity: 1; }
    .control::-webkit-calendar-picker-indicator { display: none; }
    .control.plain { height: 60px; background: #a5a6a8; border-color: #888d93; font-size: 24px; }
    .control.plain::placeholder { color: #626366; }
    .field .icon { position: absolute; right: 24px; bottom: 22px; color: #0c0c0e; pointer-events: none; }
    .facts { display: grid; grid-template-columns: 244px 1fr; row-gap: 16px; margin-top: 24px; padding-top: 28px; border-top: 2px solid #35363e; }
    dt { font: 600 20px/33px var(--mono); color: #9496a2; }
    dd { font: 400 22px/33px var(--sans); }
    .nested { padding-left: 8px; }
    .foot { display: flex; align-items: center; justify-content: space-between; padding: 24px 36px; border-top: 2px solid #35363e; color: #9c9ea9; font-size: 20px; }
    .meta { display: flex; gap: 32px; }
    .meta span { display: flex; align-items: center; gap: 12px; }
    .pager { display: flex; align-items: center; gap: 38px; font: 600 22px/30px var(--sans); }
    .grip { position: absolute; right: 0; bottom: 0; width: 16px; height: 16px; }
  `];

  private select(label: string, id: string, value: string) {
    return html`<div class="field"><label class="label" for=${id}>${label}</label>
      <select class="control" id=${id}><option>${value}</option></select>${icon("down", "i20")}</div>`;
  }

  render() {
    return html`
      <section class="dialog" role="dialog" aria-modal="true" aria-labelledby="heading">
        <div class="head">
          <div>
            <h2 id="heading">Clash1</h2>
            <div class="who">Steel ASTM A992<span class="status">Assigned</span></div>
            <div class="tags">
              <span class="pill high">HIGH</span><span class="pill">STRUCTURAL</span><span class="pill">ARCHITECTURE</span>
              <span class="aging large">${icon("clock", "i22")}${AGING}</span>
            </div>
          </div>
          <button class="round" aria-label="Close">${icon("close", "i20")}</button>
        </div>
        <div class="stage">
          <div class="frame">
            <svg class="photo" viewBox="46 36 1476 1446" preserveAspectRatio="none" aria-hidden="true">${clashScene()}</svg>
            <div class="tools">
              ${[["expand", "Fit", "i30"], ["zoomIn", "Zoom in", "i28"], ["zoomOut", "Zoom out", "i28"], ["reset", "Reset", "i30"]].map(
                ([g, name, size]) => html`<button class="tool" aria-label=${name}>${icon(g, size)}</button>`)}
            </div>
          </div>
        </div>
        <div class="content">
          <div class="tabs">
            ${["Overview", "Activity", "Files"].map((t) => html`
              <button class=${classMap({ tab: true, on: t === this.tab })} @click=${() => (this.tab = t)}>${t}</button>`)}
          </div>
          <div class="panel">
            <span class="label">TRADE(S)</span>
            <div class="trades">${trades.map((t) => html`<button class=${classMap({ trade: true, on: !!t.on })}>${t.name}</button>`)}</div>
            <div class="fields">
              ${this.select("RESPONSIBLE USER", "user", "")}
              ${this.select("PRIORITY", "priority", "High")}
              <div class="field"><label class="label" for="due">DUE DATE</label><input class="control" id="due" type="date" /></div>
              ${this.select("STATUS", "status", "Assigned")}
              <div class="field"><label class="label" for="group">GROUP</label><input class="control plain" id="group" type="text" placeholder="Ungrouped" /></div>
            </div>
          </div>
          <dl class="facts">
            ${facts.map((f) => html`<dt>${f.key}</dt><dd class=${f.nested ? "nested" : ""}>${f.value}</dd>`)}
          </dl>
        </div>
        <div class="foot">
          <div class="meta"><span>${icon("target")}Clash1</span><span>${icon("calendar")}Aug 14, 2026</span></div>
          <div class="pager">
            <button class="round" disabled aria-label="Previous">${icon("left", "i32")}</button>
            1 of 327
            <button class="round" aria-label="Next">${icon("right", "i32")}</button>
          </div>
        </div>
        <svg class="grip" viewBox="0 0 16 16" aria-hidden="true">
          <path d="M1 14L14 1M8 14l6-6" stroke="#000" stroke-width="4"/><path d="M1 15L15 1M8 15l7-7" stroke="#d8d8d8" stroke-width="2"/>
        </svg>
      </section>
    `;
  }
}

/* ---------- shell ---------- */

@customElement("app-root")
class AppRoot extends LitElement {
  static styles = css`
    :host { display: block; }
    .shell { display: flex; height: 100vh; overflow: hidden; }
    .overlay { position: fixed; inset: 0; display: flex; align-items: center; justify-content: center; background: rgba(18, 20, 23, 0.55); }
  `;

  render() {
    return html`
      <div class="shell"><app-sidebar></app-sidebar><clash-page></clash-page></div>
      <div class="overlay"><clash-dialog></clash-dialog></div>
    `;
  }
}
